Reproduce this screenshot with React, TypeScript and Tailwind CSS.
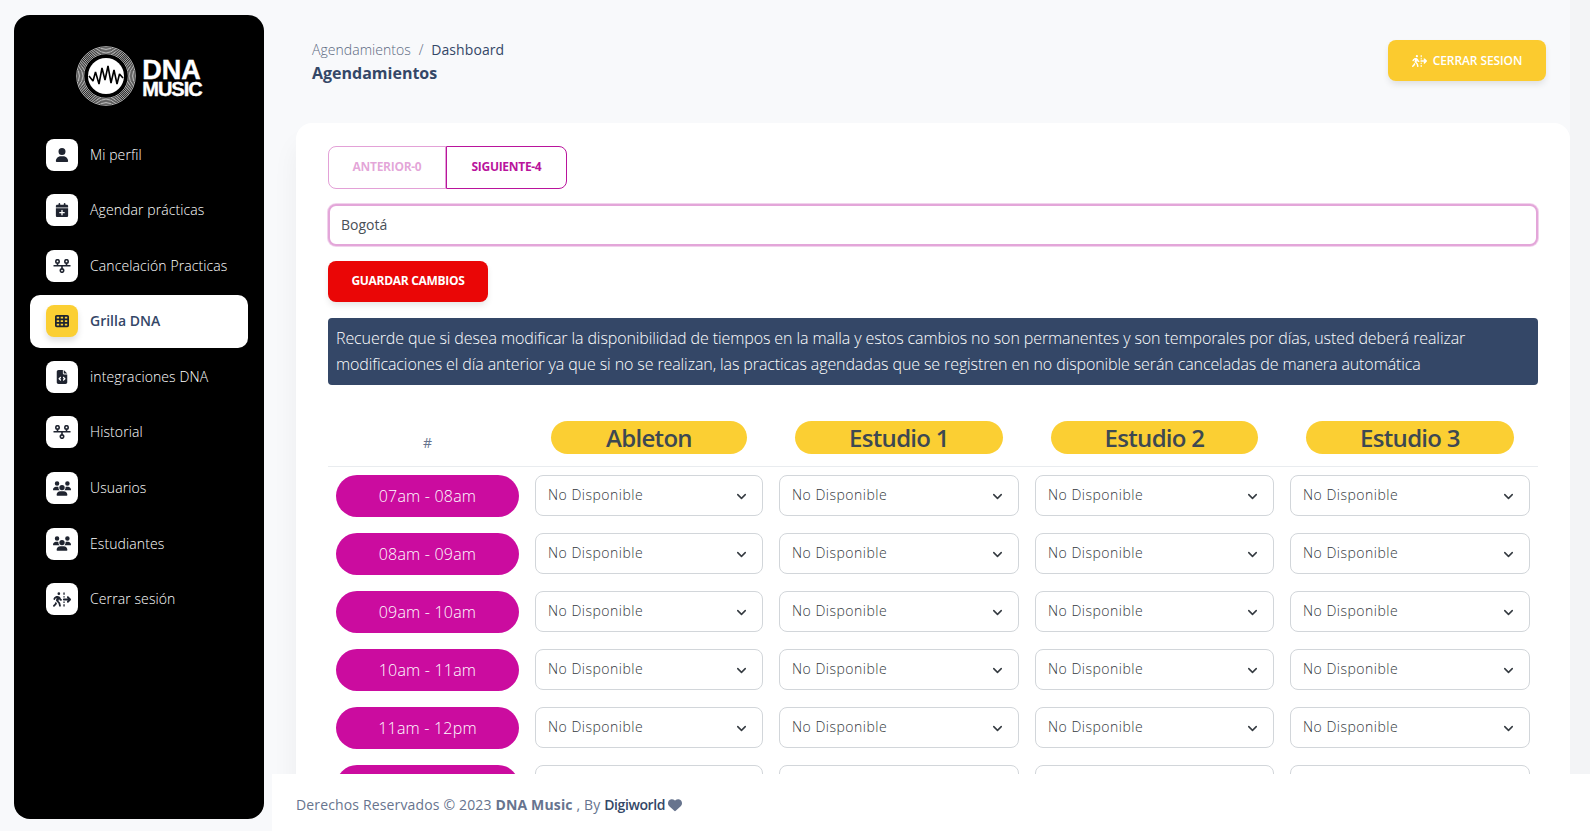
import { ReactNode } from "react";
import {
  FaCalendarPlus,
  FaFileCode,
  FaHeart,
  FaPersonWalkingDashedLineArrowRight,
  FaTableCells,
  FaUser,
  FaUsers,
} from "react-icons/fa6";
import { ChevronDown } from "lucide-react";

function NodesIcon() {
  return (
    <svg viewBox="0 0 18 14" className="h-[14px] w-[18px]" fill="none" stroke="currentColor" strokeWidth="1.6">
      <circle cx="4.5" cy="2.4" r="1.7" />
      <circle cx="13.5" cy="2.4" r="1.7" />
      <circle cx="9" cy="11.6" r="1.7" />
      <path d="M0.5 6.8H17.5M4.5 4V6.8M13.5 4V6.8M9 6.8V9.9" />
    </svg>
  );
}

const navItems: { label: string; icon: ReactNode; active?: boolean }[] = [
  { label: "Mi perfil", icon: <FaUser className="h-[14px] w-[14px]" /> },
  { label: "Agendar prácticas", icon: <FaCalendarPlus className="h-[14px] w-[14px]" /> },
  { label: "Cancelación Practicas", icon: <NodesIcon /> },
  { label: "Grilla DNA", icon: <FaTableCells className="h-[14px] w-[14px]" />, active: true },
  { label: "integraciones DNA", icon: <FaFileCode className="h-[14px] w-[14px]" /> },
  { label: "Historial", icon: <NodesIcon /> },
  { label: "Usuarios", icon: <FaUsers className="h-[15px] w-[18px]" /> },
  { label: "Estudiantes", icon: <FaUsers className="h-[15px] w-[18px]" /> },
  { label: "Cerrar sesión", icon: <FaPersonWalkingDashedLineArrowRight className="h-[15px] w-[18px]" /> },
];

const hours = [
  "07am - 08am",
  "08am - 09am",
  "09am - 10am",
  "10am - 11am",
  "11am - 12pm",
  "12pm - 01pm",
];

const rooms = ["Ableton", "Estudio 1", "Estudio 2", "Estudio 3"];

function Logo() {
  return (
    <div className="flex h-[58px] items-center justify-center gap-[6px]">
      <svg viewBox="0 0 60 60" className="h-[60px] w-[60px]" fill="none">
        {[29.3, 27.9, 26.5, 25.1, 23.7, 22.3].map((r) => (
          <circle key={r} cx="30" cy="30" r={r} stroke="#e8e8e8" strokeWidth="0.8" />
        ))}
        <circle cx="30" cy="30" r="18" fill="#fff" />
        <path
          d="M13 30L17 35L19.5 26L23 38L26 22L29 34L32 20L35 37L38 24L41 38L43.5 28L47 32"
          stroke="#000"
          strokeWidth="1.6"
          strokeLinejoin="bevel"
        />
      </svg>
      <div className="mt-[6px] font-['Liberation_Sans',sans-serif] font-bold text-white [-webkit-text-stroke:0.4px_white]">
        <div className="text-[27px] leading-[19px]">DNA</div>
        <div className="mt-[2px] text-[20px] leading-[15px] tracking-[-1px]">MUSIC</div>
      </div>
    </div>
  );
}

function Sidebar() {
  return (
    <aside className="mb-[12px] ml-[14px] mt-[15px] w-[250px] shrink-0 rounded-2xl bg-black px-4">
      <div className="pt-[32px]">
        <Logo />
      </div>
      <ul className="mt-[23px] flex flex-col gap-[2.6px]">
        {navItems.map((item) => (
          <li
            key={item.label}
            className={`flex h-[53px] items-center gap-3 rounded-[10px] px-4 text-sm ${
              item.active ? "bg-white font-semibold text-[#344767]" : "font-light tracking-[0.1px] text-white"
            }`}
          >
            <span
              className={`flex h-8 w-8 items-center justify-center rounded-lg text-[#1f2430] ${
                item.active ? "bg-[#fbcf33] shadow-[0_4px_6px_rgba(0,0,0,0.12)]" : "bg-white"
              }`}
            >
              {item.icon}
            </span>
            <span className={item.active ? "-mt-px" : ""}>{item.label}</span>
          </li>
        ))}
      </ul>
    </aside>
  );
}

function Slot() {
  return (
    <div className="relative">
      <select className="h-[41px] w-full appearance-none rounded-lg border border-[#d2d6da] bg-white pb-[2px] pl-3 pr-8 text-sm font-light tracking-[0.5px] text-[#33383d]">
        <option>No Disponible</option>
      </select>
      <ChevronDown className="pointer-events-none absolute right-[14px] top-[14px] h-[15px] w-[15px] text-[#343a40]" strokeWidth={2.4} />
    </div>
  );
}

function Grilla() {
  return (
    <div className="mt-[28px] grid grid-cols-[199px_244px_256px_255px_256px]">
      <div className="flex h-[54px] items-end justify-center border-b border-[#e9ecef] pb-[13px] text-sm text-[#67748e]">#</div>
      {rooms.map((room) => (
        <div key={room} className="h-[54px] border-b border-[#e9ecef] px-6 pt-2">
          <div className="h-[33px] rounded-full bg-[#fbcf33] text-center text-2xl font-semibold leading-[33px] tracking-[-0.7px] text-[#3d4852]">
            {room}
          </div>
        </div>
      ))}
      {hours.map((hour) => (
        <div key={hour} className="contents">
          <div className="p-2">
            <div className="h-[42px] rounded-full bg-[#cb0c9f] text-center font-light leading-[42px] tracking-[0.2px] text-white">{hour}</div>
          </div>
          {rooms.map((room) => (
            <div key={room} className="p-2">
              <Slot />
            </div>
          ))}
        </div>
      ))}
    </div>
  );
}

export default function App() {
  return (
    <div className="flex h-[831px] overflow-hidden bg-[#f8f9fb] font-['Open_Sans',sans-serif]">
      <Sidebar />
      <div className="ml-2 flex min-w-0 flex-1 flex-col">
        <main className="min-h-0 flex-1 overflow-hidden border-r-[20px] border-[#f3f4f6] pl-6">
          <div className="flex h-[123px] items-start justify-between pl-4 pr-6 pt-[40px]">
            <div>
              <div className="text-sm font-light leading-5 tracking-[0.05px] text-[#5a6880]">
                Agendamientos <span className="mx-1">/</span>{" "}
                <span className="font-normal tracking-[0.1px] text-[#344767]">Dashboard</span>
              </div>
              <h1 className="mt-[3px] text-base font-bold leading-5 text-[#344767]">Agendamientos</h1>
            </div>
            <button
              type="button"
              className="flex h-[41px] w-[158px] items-center justify-center gap-[6px] rounded-lg bg-[#fbcb2f] text-xs font-semibold tracking-[-0.1px] text-white shadow-[0_4px_7px_-1px_rgba(0,0,0,0.11)]"
            >
              <FaPersonWalkingDashedLineArrowRight className="h-3 w-[15px]" />
              CERRAR SESION
            </button>
          </div>

          <section className="rounded-2xl bg-white px-8 pt-[23px] shadow-[0_20px_27px_rgba(0,0,0,0.05)]">
            <div className="flex">
              <button
                type="button"
                className="h-[43px] w-[118px] rounded-l-lg border border-[#b9149c]/40 pb-[2px] text-xs font-bold tracking-[-0.3px] text-[#b9149c]/40"
              >
                ANTERIOR-0
              </button>
              <button
                type="button"
                className="h-[43px] w-[121px] rounded-r-lg border border-[#b9149c] pb-[2px] text-xs font-bold tracking-[-0.3px] text-[#b9149c]"
              >
                SIGUIENTE-4
              </button>
            </div>
            <input
              readOnly
              value="Bogotá"
              className="mt-[15px] block h-[42px] w-full rounded-lg border-2 border-[#e3a6d9] bg-white px-[11px] pb-[2px] text-sm text-[#495057] shadow-[0_0_0_1px_rgba(227,166,217,0.5)] outline-none"
            />
            <button
              type="button"
              className="mt-[15px] block h-[41px] w-[160px] rounded-lg bg-[#ea0606] pb-[2px] text-xs font-bold tracking-[-0.3px] text-white shadow-[0_4px_7px_-1px_rgba(0,0,0,0.11)]"
            >
              GUARDAR CAMBIOS
            </button>
            <div className="mt-4 h-[67px] rounded bg-[#344767] px-2 py-[7px] text-base font-light leading-[26px] tracking-[-0.1px] text-white">
              Recuerde que si desea modificar la disponibilidad de tiempos en la malla y estos cambios no son permanentes y son temporales por días, usted deberá realizar modificaciones el día anterior ya que si no se realizan, las practicas agendadas que se registren en no disponible serán canceladas de manera automática
            </div>
            <Grilla />
          </section>
        </main>
        <footer className="flex h-[57px] shrink-0 items-center bg-white pl-6 pt-[5px] text-sm tracking-[0.15px] text-[#67748e]">
          <span>
            Derechos Reservados © 2023 <b className="font-bold">DNA Music</b> , By{" "}
            <b className="font-semibold tracking-[-0.4px] text-[#344767]">Digiworld</b>
          </span>
          <FaHeart className="ml-[3px] h-[14px] w-[14px]" />
        </footer>
      </div>
    </div>
  );
}
